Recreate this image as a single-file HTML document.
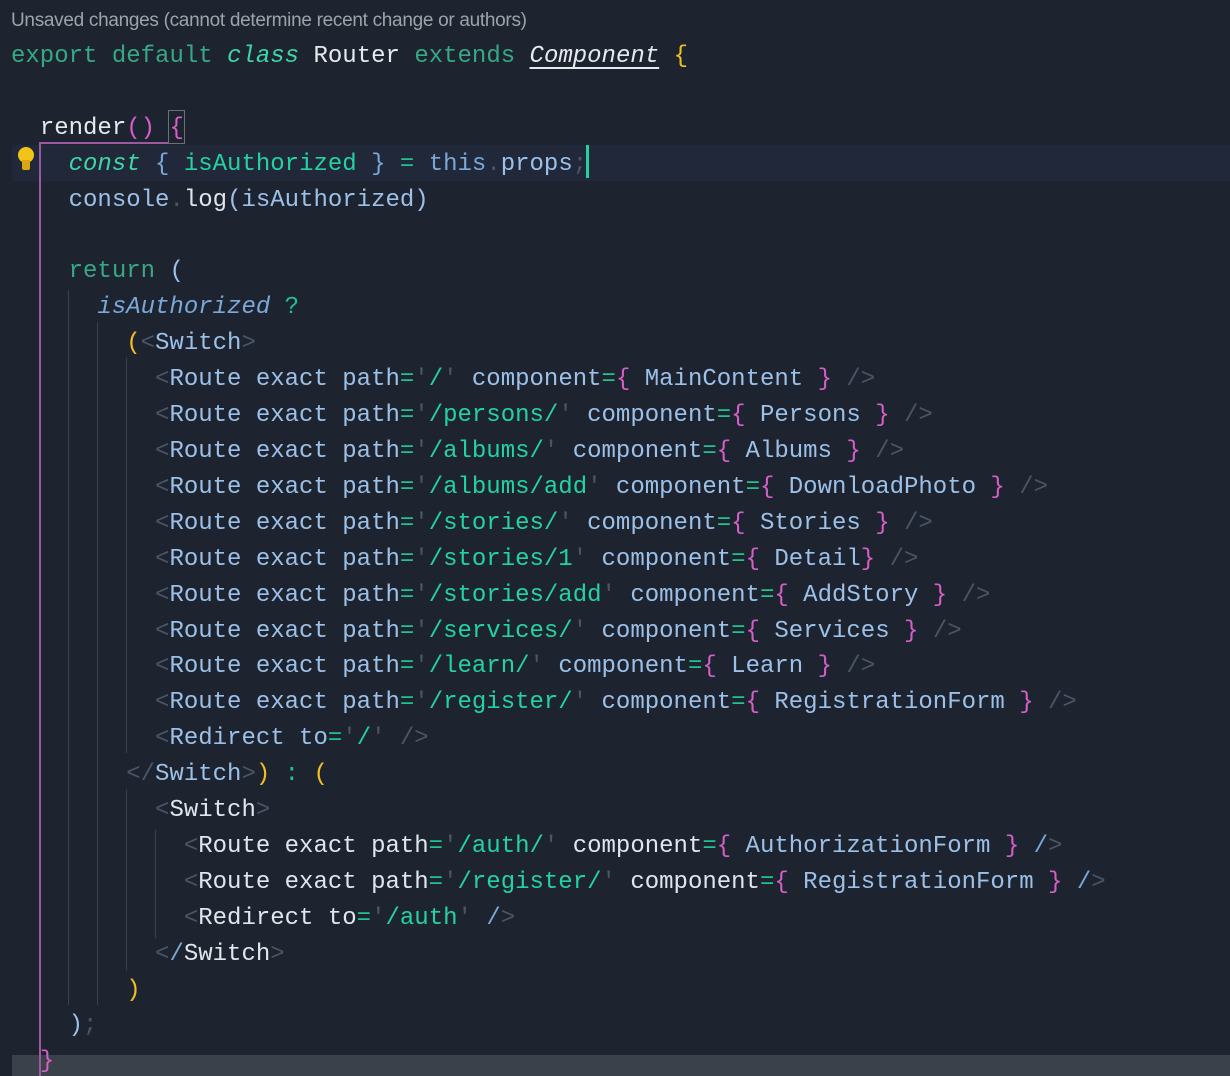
<!DOCTYPE html>
<html><head><meta charset="utf-8"><style>
html,body{margin:0;padding:0;background:#1d2430;width:1230px;height:1076px;overflow:hidden;position:relative}
.top{position:absolute;left:11px;top:10px;font-family:"Liberation Sans",sans-serif;font-size:19px;color:#9ea3aa;letter-spacing:-0.3px}
pre{position:absolute;left:11px;top:39px;margin:0;font-family:"Liberation Mono",monospace;font-size:24px;line-height:35.9px;color:#9cc0e8;letter-spacing:0}
.k{color:#36a884}.c{color:#3dd6a6;font-style:italic}.w{color:#e6eaef}.a{color:#9cc0e8}.s{color:#22d3a0}.p{color:#d45fc8}.g{color:#4a5565}.y{color:#f0c020}.e{color:#22c18f}.b{color:#7aa8d8}.wt{color:#dfe6ee}
.cmp{color:#e6eaef;font-style:italic;text-decoration:underline;text-underline-offset:5px}
.hl{position:absolute;left:12px;top:145px;width:1218px;height:36px;background:#20283a}
.last{position:absolute;left:12px;top:1055px;width:1218px;height:21px;background:#3b414b}
.v{position:absolute;width:1px;background:#374151}
</style></head><body>
<div class="hl"></div>
<div class="last"></div>
<div style="position:absolute;left:39px;top:143px;width:2px;height:933px;background:#9b5aa0"></div>
<div style="position:absolute;left:39px;top:142px;width:130px;height:2px;background:#9b5aa0"></div>
<div style="position:absolute;left:168px;top:110px;width:15px;height:32px;border:1px solid #6b6f76"></div>
<div class="v" style="left:68px;top:290px;height:715px"></div>
<div class="v" style="left:97px;top:322px;height:683px"></div>
<div class="v" style="left:126px;top:358px;height:395px"></div>
<div class="v" style="left:126px;top:790px;height:180px"></div>
<div class="v" style="left:155px;top:830px;height:108px"></div>
<div style="position:absolute;left:18px;top:147px;width:16px;height:16px;border-radius:50%;background:#f2c418"></div>
<div style="position:absolute;left:22px;top:160px;width:8px;height:10px;background:#d9a810;border-radius:0 0 2px 2px"></div>
<div style="position:absolute;left:586px;top:145px;width:3px;height:33px;background:#22d3a0"></div>
<div class="top">Unsaved changes (cannot determine recent change or authors)</div>
<pre><span class="k">export</span> <span class="k">default</span> <span class="c">class</span> <span class="w">Router</span> <span class="k">extends</span> <span class="cmp">Component</span> <span class="y">{</span>

  <span class="w">render</span><span class="p">()</span> <span class="p">{</span>
    <span class="c">const</span> <span class="b">{</span> <span class="s">isAuthorized</span> <span class="b">}</span> <span class="e">=</span> <span class="b">this</span><span class="g">.</span><span class="a">props</span><span class="g">;</span>
    <span class="a">console</span><span class="g">.</span><span class="wt">log</span><span class="a">(isAuthorized)</span>

    <span class="k">return</span> <span class="a">(</span>
      <span class="b" style="font-style:italic">isAuthorized</span> <span class="e">?</span>
        <span class="y">(</span><span class="g">&lt;</span>Switch<span class="g">&gt;</span>
          <span class="g">&lt;</span>Route exact path<span class="e">=</span><span class="g">'</span><span class="s">/</span><span class="g">'</span> component<span class="e">=</span><span class="p">{</span> MainContent <span class="p">}</span> <span class="g">/&gt;</span>
          <span class="g">&lt;</span>Route exact path<span class="e">=</span><span class="g">'</span><span class="s">/persons/</span><span class="g">'</span> component<span class="e">=</span><span class="p">{</span> Persons <span class="p">}</span> <span class="g">/&gt;</span>
          <span class="g">&lt;</span>Route exact path<span class="e">=</span><span class="g">'</span><span class="s">/albums/</span><span class="g">'</span> component<span class="e">=</span><span class="p">{</span> Albums <span class="p">}</span> <span class="g">/&gt;</span>
          <span class="g">&lt;</span>Route exact path<span class="e">=</span><span class="g">'</span><span class="s">/albums/add</span><span class="g">'</span> component<span class="e">=</span><span class="p">{</span> DownloadPhoto <span class="p">}</span> <span class="g">/&gt;</span>
          <span class="g">&lt;</span>Route exact path<span class="e">=</span><span class="g">'</span><span class="s">/stories/</span><span class="g">'</span> component<span class="e">=</span><span class="p">{</span> Stories <span class="p">}</span> <span class="g">/&gt;</span>
          <span class="g">&lt;</span>Route exact path<span class="e">=</span><span class="g">'</span><span class="s">/stories/1</span><span class="g">'</span> component<span class="e">=</span><span class="p">{</span> Detail<span class="p">}</span> <span class="g">/&gt;</span>
          <span class="g">&lt;</span>Route exact path<span class="e">=</span><span class="g">'</span><span class="s">/stories/add</span><span class="g">'</span> component<span class="e">=</span><span class="p">{</span> AddStory <span class="p">}</span> <span class="g">/&gt;</span>
          <span class="g">&lt;</span>Route exact path<span class="e">=</span><span class="g">'</span><span class="s">/services/</span><span class="g">'</span> component<span class="e">=</span><span class="p">{</span> Services <span class="p">}</span> <span class="g">/&gt;</span>
          <span class="g">&lt;</span>Route exact path<span class="e">=</span><span class="g">'</span><span class="s">/learn/</span><span class="g">'</span> component<span class="e">=</span><span class="p">{</span> Learn <span class="p">}</span> <span class="g">/&gt;</span>
          <span class="g">&lt;</span>Route exact path<span class="e">=</span><span class="g">'</span><span class="s">/register/</span><span class="g">'</span> component<span class="e">=</span><span class="p">{</span> RegistrationForm <span class="p">}</span> <span class="g">/&gt;</span>
          <span class="g">&lt;</span>Redirect to<span class="e">=</span><span class="g">'</span><span class="s">/</span><span class="g">'</span> <span class="g">/&gt;</span>
        <span class="g">&lt;/</span>Switch<span class="g">&gt;</span><span class="y">)</span> <span class="e">:</span> <span class="y">(</span>
          <span class="g">&lt;</span><span class="wt">Switch</span><span class="g">&gt;</span>
            <span class="g">&lt;</span><span class="wt">Route exact path</span><span class="e">=</span><span class="g">'</span><span class="s">/auth/</span><span class="g">'</span> <span class="wt">component</span><span class="e">=</span><span class="p">{</span> AuthorizationForm <span class="p">}</span> <span class="b">/</span><span class="g">&gt;</span>
            <span class="g">&lt;</span><span class="wt">Route exact path</span><span class="e">=</span><span class="g">'</span><span class="s">/register/</span><span class="g">'</span> <span class="wt">component</span><span class="e">=</span><span class="p">{</span> RegistrationForm <span class="p">}</span> <span class="b">/</span><span class="g">&gt;</span>
            <span class="g">&lt;</span><span class="wt">Redirect to</span><span class="e">=</span><span class="g">'</span><span class="s">/auth</span><span class="g">'</span> <span class="b">/</span><span class="g">&gt;</span>
          <span class="g">&lt;</span><span class="b">/</span><span class="wt">Switch</span><span class="g">&gt;</span>
        <span class="y">)</span>
    <span class="a">)</span><span class="g">;</span>
  <span class="p">}</span></pre>
</body></html>
